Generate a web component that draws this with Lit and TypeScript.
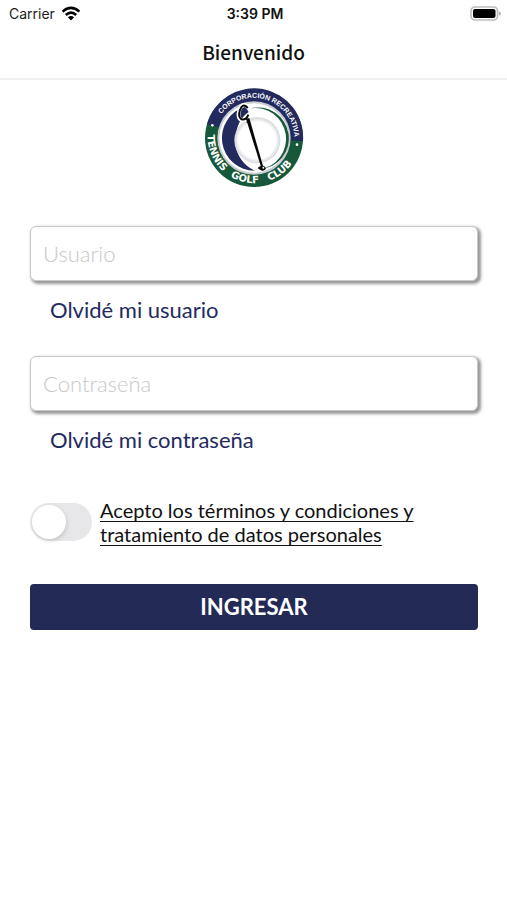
import { LitElement, html, css, svg } from "lit";
import { customElement } from "lit/decorators.js";

@customElement("status-bar")
class StatusBar extends LitElement {
  static styles = css`
    :host {
      display: grid;
      grid-template-columns: 1fr auto 1fr;
      align-items: center;
      height: 27px;
      padding: 0 6px 0 9px;
      font: 400 14px/18px Inter, sans-serif;
      color: #1c1c1c;
    }
    .left {
      display: flex;
      align-items: center;
      gap: 6px;
    }
    .time {
      font-weight: 600;
      color: #111;
    }
    .battery {
      justify-self: end;
    }
    svg {
      display: block;
    }
  `;

  render() {
    return html`
      <div class="left">
        <span>Carrier</span>
        <svg width="20" height="15" viewBox="0 0 20 15" fill="none" stroke="#000" stroke-width="2.6">
          <path d="M1.6 5.6Q10-1.9 18.4 5.6" />
          <path d="M4.8 9Q10 4.3 15.2 9" />
          <path d="M10 14.4L6.9 11.2Q10 8.6 13.1 11.2Z" fill="#000" stroke="none" />
        </svg>
      </div>
      <span class="time">3:39 PM</span>
      <svg class="battery" width="31" height="15" viewBox="0 0 31 15">
        <rect x="1" y="1" width="26.5" height="13" rx="4" fill="#fff" stroke="#bdbdbd" stroke-width="1.6" />
        <rect x="3" y="3" width="22.5" height="9" rx="2" fill="#000" />
        <path d="M28.8 5.3Q31 6 31 7.5T28.8 9.7Z" fill="#b0b0b0" />
      </svg>
    `;
  }
}

@customElement("club-logo")
class ClubLogo extends LitElement {
  static styles = css`
    :host {
      display: block;
    }
    svg {
      display: block;
    }
    .top {
      font: 700 21px "Liberation Sans", sans-serif;
      fill: #fff;
    }
    .bottom {
      font: 700 30px "DejaVu Sans", sans-serif;
      fill: #fff;
    }
  `;

  render() {
    return html`
      <svg width="100" height="100" viewBox="18 18 300 300" role="img" aria-label="Tennis Golf Club">
        ${svg`
          <defs>
            <path id="arc-top" d="M70 96A122 122 0 0 1 288 188" />
            <path id="arc-bottom" d="M29 158A139.5 139.5 0 0 0 305 192" />
            <radialGradient id="face">
              <stop offset="0.8" stop-color="#fff" />
              <stop offset="1" stop-color="#d3d5da" />
            </radialGradient>
          </defs>
          <circle cx="168" cy="168" r="147" fill="#17583a" />
          <path d="M27 126A147 147 0 0 1 315 178L168 168Z" fill="#232a5e" />
          <circle cx="168" cy="168" r="110" fill="#c9ccd2" />
          <circle cx="168" cy="168" r="104" fill="#fff" />
          <path d="M142 74A98 98 0 0 0 170 266A98 98 0 0 1 112 180Q112 118 152 90Z" fill="#232a5e" />
          <path d="M157 79A93 93 0 1 1 186 262A88 88 0 0 0 157 79Z" fill="#17583a" />
          <circle cx="178" cy="175" r="69" fill="url(#face)" />
          <path d="M149 74Q138 62 129 74C120 86 118 107 130 114Q146 117 151 101" fill="none" stroke="#fff" stroke-width="12" />
          <path d="M148 76Q137 65 130 76C122 88 120 106 131 112Q145 114 150 100" fill="none" stroke="#080808" stroke-width="6" stroke-linecap="round" />
          <path d="M144 110L154 108L195 252L189 254Z" fill="#080808" />
          <path d="M145 121L155 118M180 258Q188 250 198 253Q207 258 199 264Q190 268 180 258Z" fill="#080808" stroke="#080808" stroke-width="2" />
          <circle cx="196" cy="257" r="3" fill="#fff" />
          <circle cx="43" cy="130" r="4" fill="#fff" />
          <circle cx="297" cy="188" r="4" fill="#fff" />
          <text class="top"><textPath href="#arc-top">CORPORACIÓN RECREATIVA</textPath></text>
          <text class="bottom"><textPath href="#arc-bottom">TENNIS</textPath></text>
          <text class="bottom"><textPath href="#arc-bottom" startOffset="150">GOLF</textPath></text>
          <text class="bottom"><textPath href="#arc-bottom" startOffset="270">CLUB</textPath></text>
        `}
      </svg>
    `;
  }
}

@customElement("app-root")
class AppRoot extends LitElement {
  static styles = css`
    :host {
      display: block;
      min-height: 100vh;
      background: #fff;
      font-family: Lato, sans-serif;
      color: #111;
    }
    * {
      box-sizing: border-box;
    }
    .title {
      margin: 0;
      height: 53px;
      border-bottom: 2px solid #f0f0f0;
      font: 500 19px/50px "Noto Sans CJK SC", sans-serif;
      text-align: center;
    }
    .logo {
      display: flex;
      justify-content: center;
      padding-top: 8px;
    }
    .form {
      display: flex;
      flex-direction: column;
      padding: 38px 29px 0 30px;
    }
    .field {
      width: 100%;
      height: 55px;
      padding: 0 12px;
      border: 1px solid #c8c8c8;
      border-radius: 6px;
      box-shadow: 2px 2px 3px 1px #999;
      background: #fff;
      font: 300 22px/28px Lato, sans-serif;
      color: #111;
      outline: none;
    }
    .field::placeholder {
      color: #c8c8c8;
      opacity: 1;
    }
    .forgot {
      align-self: flex-start;
      margin: 15px 20px 32px;
      font-size: 22px;
      line-height: 28px;
      color: #232a5e;
      text-decoration: none;
    }
    .terms {
      display: flex;
      align-items: center;
      gap: 8px;
      margin: 12px 0 38px;
    }
    .switch {
      appearance: none;
      flex: none;
      display: flex;
      align-items: center;
      width: 62px;
      height: 38px;
      margin: 0;
      padding: 2px;
      border-radius: 19px;
      background: #e7e7e9;
    }
    .switch::before {
      content: "";
      width: 34px;
      height: 34px;
      border-radius: 50%;
      background: #fff;
      box-shadow: 1px 2px 4px #0002;
    }
    .switch:checked {
      justify-content: flex-end;
      background: #232a5e;
    }
    .conditions {
      max-width: 320px;
      font-size: 20px;
      line-height: 24px;
      color: #111;
      text-decoration: underline;
      text-decoration-thickness: 1px;
      text-underline-offset: 3px;
    }
    .submit {
      height: 46px;
      border: 0;
      border-radius: 4px;
      background: #232a56;
      font: 700 22px/28px Lato, sans-serif;
      color: #fff;
    }
  `;

  render() {
    return html`
      <status-bar></status-bar>
      <h1 class="title">Bienvenido</h1>
      <div class="logo"><club-logo></club-logo></div>
      <form class="form">
        <input class="field" type="text" placeholder="Usuario" aria-label="Usuario" />
        <a class="forgot" href="#usuario">Olvidé mi usuario</a>
        <input class="field" type="password" placeholder="Contraseña" aria-label="Contraseña" />
        <a class="forgot" href="#contrasena">Olvidé mi contraseña</a>
        <div class="terms">
          <input class="switch" type="checkbox" role="switch" aria-labelledby="conditions" />
          <a class="conditions" id="conditions" href="#terminos">Acepto los términos y condiciones y tratamiento de datos personales</a>
        </div>
        <button class="submit" type="button">INGRESAR</button>
      </form>
    `;
  }
}
